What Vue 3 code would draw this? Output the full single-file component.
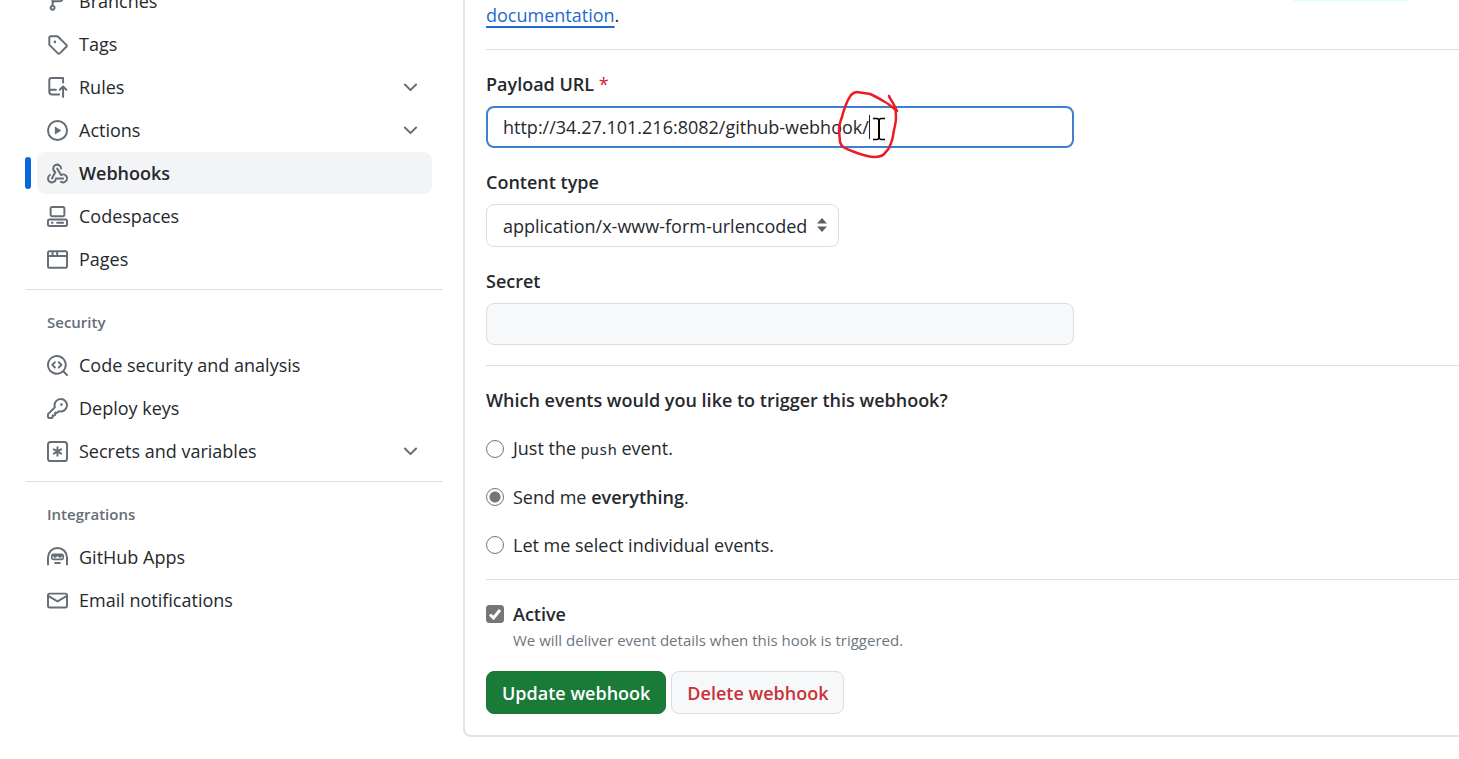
<script setup>
import { ref } from 'vue'

const icons = {
  branch: ['M9.5 3.25a2.25 2.25 0 1 1 3 2.122V6A2.5 2.5 0 0 1 10 8.5H6a1 1 0 0 0-1 1v1.128a2.251 2.251 0 1 1-1.5 0V5.372a2.25 2.25 0 1 1 1.5 0v1.836A2.493 2.493 0 0 1 6 7h4a1 1 0 0 0 1-1v-.628A2.25 2.25 0 0 1 9.5 3.25Zm-6 0a.75.75 0 1 0 1.5 0 .75.75 0 0 0-1.5 0Zm8.25-.75a.75.75 0 1 0 0 1.5.75.75 0 0 0 0-1.5ZM4.25 12a.75.75 0 1 0 0 1.5.75.75 0 0 0 0-1.5Z'],
  tag: ['M1 7.775V2.75C1 1.784 1.784 1 2.75 1h5.025c.464 0 .91.184 1.238.513l6.25 6.25a1.75 1.75 0 0 1 0 2.474l-5.026 5.026a1.75 1.75 0 0 1-2.474 0l-6.25-6.25A1.752 1.752 0 0 1 1 7.775Zm1.5 0c0 .066.026.13.073.177l6.25 6.25a.25.25 0 0 0 .354 0l5.025-5.025a.25.25 0 0 0 0-.354l-6.25-6.25a.25.25 0 0 0-.177-.073H2.75a.25.25 0 0 0-.25.25ZM6 5a1 1 0 1 1 0 2 1 1 0 0 1 0-2Z'],
  rules: ['M1 2.5A2.5 2.5 0 0 1 3.5 0h8.75a.75.75 0 0 1 .75.75v3.5a.75.75 0 0 1-1.5 0V1.5h-8a1 1 0 0 0-1 1v6.708A2.493 2.493 0 0 1 3.5 9h3.25a.75.75 0 0 1 0 1.5H3.5a1 1 0 0 0 0 2h5.75a.75.75 0 0 1 0 1.5H3.5A2.5 2.5 0 0 1 1 11.5Zm13.23 7.79h-.001l-1.224-1.224v6.184a.75.75 0 0 1-1.5 0V9.066L10.28 10.29a.75.75 0 0 1-1.06-1.061l2.505-2.504a.75.75 0 0 1 1.06 0L15.29 9.23a.751.751 0 0 1-.018 1.042.751.751 0 0 1-1.042.018Z'],
  play: ['M8 0a8 8 0 1 1 0 16A8 8 0 0 1 8 0ZM1.5 8a6.5 6.5 0 1 0 13 0 6.5 6.5 0 0 0-13 0Zm4.879-2.773 4.264 2.559a.25.25 0 0 1 0 .428l-4.264 2.559A.25.25 0 0 1 6 10.559V5.442a.25.25 0 0 1 .379-.215Z'],
  webhook: [
    'M5.5 4.25a2.25 2.25 0 0 1 4.5 0 .75.75 0 0 0 1.5 0 3.75 3.75 0 1 0-6.14 2.889l-2.272 4.258a.75.75 0 0 0 1.324.706L7 7.25a.75.75 0 0 0-.309-1.015A2.25 2.25 0 0 1 5.5 4.25Z',
    'M7.364 3.607a.75.75 0 0 1 1.03.257l2.608 4.349a3.75 3.75 0 1 1-.628 6.785.75.75 0 0 1 .752-1.299 2.25 2.25 0 1 0-.033-3.88.75.75 0 0 1-1.03-.256L7.107 4.636a.75.75 0 0 1 .257-1.03Z',
    'M2.9 8.776A.75.75 0 0 1 2.625 9.8 2.25 2.25 0 1 0 6 11.75a.75.75 0 0 1 .75-.751h5.5a.75.75 0 0 1 0 1.5H7.425a3.75 3.75 0 1 1-5.55-3.998.75.75 0 0 1 1.024.274Z',
  ],
  codespaces: [
    'M0 11.25c0-.966.784-1.75 1.75-1.75h12.5c.966 0 1.75.784 1.75 1.75v3A1.75 1.75 0 0 1 14.25 16H1.75A1.75 1.75 0 0 1 0 14.25Zm2-9.5C2 .784 2.784 0 3.75 0h8.5C13.216 0 14 .784 14 1.75v5a1.75 1.75 0 0 1-1.75 1.75h-8.5A1.75 1.75 0 0 1 2 6.75Zm1.75-.25a.25.25 0 0 0-.25.25v5c0 .138.112.25.25.25h8.5a.25.25 0 0 0 .25-.25v-5a.25.25 0 0 0-.25-.25Zm-2 9.5a.25.25 0 0 0-.25.25v3c0 .138.112.25.25.25h12.5a.25.25 0 0 0 .25-.25v-3a.25.25 0 0 0-.25-.25Z',
    'M7 12.75a.75.75 0 0 1 .75-.75h4.5a.75.75 0 0 1 0 1.5h-4.5a.75.75 0 0 1-.75-.75Zm-4 0a.75.75 0 0 1 .75-.75h.5a.75.75 0 0 1 0 1.5h-.5a.75.75 0 0 1-.75-.75Z',
  ],
  browser: ['M0 2.75C0 1.784.784 1 1.75 1h12.5c.966 0 1.75.784 1.75 1.75v10.5A1.75 1.75 0 0 1 14.25 15H1.75A1.75 1.75 0 0 1 0 13.25ZM14.5 6h-13v7.25c0 .138.112.25.25.25h12.5a.25.25 0 0 0 .25-.25Zm-6-3.5v2h6V2.75a.25.25 0 0 0-.25-.25ZM5 2.5v2h2v-2Zm-3.25 0a.25.25 0 0 0-.25.25V4.5h2v-2Z'],
  codescan: [
    'M8.47 4.97a.75.75 0 0 0 0 1.06L9.94 7.5 8.47 8.97a.75.75 0 1 0 1.06 1.06l2-2a.75.75 0 0 0 0-1.06l-2-2a.75.75 0 0 0-1.06 0ZM6.53 6.03a.75.75 0 0 0-1.06-1.06l-2 2a.75.75 0 0 0 0 1.06l2 2a.75.75 0 1 0 1.06-1.06L5.06 7.5l1.47-1.47Z',
    'M12.246 13.307a7.501 7.501 0 1 1 1.06-1.06l2.474 2.473a.749.749 0 0 1-.326 1.275.749.749 0 0 1-.734-.215ZM1.5 7.5a6.002 6.002 0 0 0 3.608 5.504 6.002 6.002 0 0 0 6.486-1.117.748.748 0 0 1 .292-.293A6 6 0 1 0 1.5 7.5Z',
  ],
  key: ['M10.5 0a5.499 5.499 0 1 1-1.288 10.848l-.932.932a.749.749 0 0 1-.53.22H7v.75a.749.749 0 0 1-.22.53l-.5.5a.749.749 0 0 1-.53.22H5v.75a.749.749 0 0 1-.22.53l-.5.5a.749.749 0 0 1-.53.22h-2A1.75 1.75 0 0 1 0 14.25v-2c0-.199.079-.389.22-.53l4.932-4.932A5.5 5.5 0 0 1 10.5 0Zm-4 5.5c-.001.431.069.86.205 1.269a.75.75 0 0 1-.181.768L1.5 12.56v1.69c0 .138.112.25.25.25h1.69l.06-.06v-1.19a.75.75 0 0 1 .75-.75h1.19l.06-.06v-1.19a.75.75 0 0 1 .75-.75h1.19l1.023-1.025a.75.75 0 0 1 .768-.18A4 4 0 1 0 6.5 5.5ZM11 6a1 1 0 1 1 0-2 1 1 0 0 1 0 2Z'],
  secret: [
    'M0 2.75A2.75 2.75 0 0 1 2.75 0h10.5A2.75 2.75 0 0 1 16 2.75v10.5A2.75 2.75 0 0 1 13.25 16H2.75A2.75 2.75 0 0 1 0 13.25ZM2.75 1.5c-.69 0-1.25.56-1.25 1.25v10.5c0 .69.56 1.25 1.25 1.25h10.5c.69 0 1.25-.56 1.25-1.25V2.75c0-.69-.56-1.25-1.25-1.25Z',
    'M8 4a.75.75 0 0 1 .75.75V6.7l1.69-.975a.75.75 0 0 1 .75 1.3L9.5 8l1.69.975a.75.75 0 0 1-.75 1.3L8.75 9.3v1.95a.75.75 0 0 1-1.5 0V9.3l-1.69.975a.75.75 0 0 1-.75-1.3L6.5 8l-1.69-.975a.75.75 0 0 1 .75-1.3L7.25 6.7V4.75A.75.75 0 0 1 8 4Z',
  ],
  hubot: ['M0 8a8 8 0 1 1 16 0v5.25a.75.75 0 0 1-1.5 0V8a6.5 6.5 0 1 0-13 0v5.25a.75.75 0 0 1-1.5 0Zm5.5 4.25a.75.75 0 0 1 .75-.75h3.5a.75.75 0 0 1 0 1.5h-3.5a.75.75 0 0 1-.75-.75ZM3 6.75C3 5.784 3.784 5 4.75 5h6.5c.966 0 1.75.784 1.75 1.75v1.5A1.75 1.75 0 0 1 11.25 10h-6.5A1.75 1.75 0 0 1 3 8.25Zm1.25 0v1.5c0 .276.224.5.5.5h6.5a.5.5 0 0 0 .5-.5v-1.5l-1.35 1.35a.55.55 0 0 1-.78 0L8 6.98l-1.62 1.12a.55.55 0 0 1-.78 0Z'],
  mail: ['M1.75 2h12.5c.966 0 1.75.784 1.75 1.75v8.5A1.75 1.75 0 0 1 14.25 14H1.75A1.75 1.75 0 0 1 0 12.25v-8.5C0 2.784.784 2 1.75 2ZM1.5 12.251c0 .138.112.25.25.25h12.5a.25.25 0 0 0 .25-.25V5.809L8.38 9.397a.75.75 0 0 1-.76 0L1.5 5.809v6.442Zm13-8.181v-.32a.25.25 0 0 0-.25-.25H1.75a.25.25 0 0 0-.25.25v.32L8 7.88Z'],
}

const sections = [
  {
    items: [
      { label: 'Branches', icon: 'branch' },
      { label: 'Tags', icon: 'tag' },
      { label: 'Rules', icon: 'rules', expandable: true },
      { label: 'Actions', icon: 'play', expandable: true },
      { label: 'Webhooks', icon: 'webhook', current: true },
      { label: 'Codespaces', icon: 'codespaces' },
      { label: 'Pages', icon: 'browser' },
    ],
  },
  {
    title: 'Security',
    items: [
      { label: 'Code security and analysis', icon: 'codescan' },
      { label: 'Deploy keys', icon: 'key' },
      { label: 'Secrets and variables', icon: 'secret', expandable: true },
    ],
  },
  {
    title: 'Integrations',
    items: [
      { label: 'GitHub Apps', icon: 'hubot' },
      { label: 'Email notifications', icon: 'mail' },
    ],
  },
]

const url = ref('http://34.27.101.216:8082/github-webhook/')
const secret = ref('')
const contentType = ref('form')
const events = ref('all')
const active = ref(true)
</script>

<template>
  <div class="page">
    <nav class="sidebar" aria-label="Settings">
      <section v-for="(section, i) in sections" :key="i" class="group">
        <h2 v-if="section.title" class="group-title">{{ section.title }}</h2>
        <ul class="list">
          <li v-for="item in section.items" :key="item.label" class="row" :class="{ current: item.current }">
            <component
              :is="item.expandable ? 'button' : 'a'"
              class="item"
              :href="item.expandable ? undefined : '#'"
              :type="item.expandable ? 'button' : undefined"
            >
              <svg class="icon" viewBox="0 0 16 16" aria-hidden="true">
                <path v-for="d in icons[item.icon]" :key="d" :d="d" fill-rule="evenodd" />
              </svg>
              <span class="item-label">{{ item.label }}</span>
              <svg v-if="item.expandable" class="icon" viewBox="0 0 16 16" aria-hidden="true">
                <path d="M12.78 5.22a.749.749 0 0 1 0 1.06l-4.25 4.25a.749.749 0 0 1-1.06 0L3.22 6.28a.749.749 0 1 1 1.06-1.06L8 8.939l3.72-3.719a.749.749 0 0 1 1.06 0Z" />
              </svg>
            </component>
          </li>
        </ul>
      </section>
    </nav>

    <main class="card">
      <p class="intro"><a href="#">documentation</a>.</p>
      <form @submit.prevent>
        <div class="block">
          <label class="label" for="url">Payload URL <span class="required">*</span></label>
          <div class="field">
            <input id="url" v-model="url" class="input focused" type="text" />
            <svg class="annotation" viewBox="0 0 66 74" aria-hidden="true">
              <path class="caret" d="M35.5 25v24" />
              <path class="beam" d="M45 29v20" />
              <path class="serif" d="M39 28.500h4l2 1 2-1h4M39 49.500h4l2-1 2 1h4" />
              <path class="ink" d="M55 6C56 9 58 11 59 13L63 21C59 18 55 14 51 12C46 9 41 6 36 4C32 3 27 3 23 2C20 2 19 3 17 5C15 8 14 10 13 12C11 17 9 22 8 27C6 32 5 36 5 40L6 52C7 55 8 56 9 57C14 60 18 61 23 63C29 65 35 67 40 67C45 67 49 66 51 63C54 60 56 57 57 53C59 49 59 45 60 40C61 36 62 31 62 27C62 24 62 21 61 18" />
            </svg>
          </div>
          <label class="label" for="type">Content type</label>
          <div class="select-wrap">
            <select id="type" v-model="contentType" class="select">
              <option value="form">application/x-www-form-urlencoded</option>
              <option value="json">application/json</option>
            </select>
            <svg class="arrows" viewBox="0 0 10 14" aria-hidden="true"><path d="M0 5.500 5 0l5 5.500ZM0 8.500h10L5 14Z" /></svg>
          </div>
          <label class="label" for="secret">Secret</label>
          <input id="secret" v-model="secret" class="input muted" type="password" />
        </div>

        <fieldset class="block events">
          <legend class="legend">Which events would you like to trigger this webhook?</legend>
          <label class="choice"><input v-model="events" class="radio" type="radio" name="events" value="push" /><span>Just the <code>push</code> event.</span></label>
          <label class="choice"><input v-model="events" class="radio" type="radio" name="events" value="all" /><span>Send me <strong>everything</strong>.</span></label>
          <label class="choice"><input v-model="events" class="radio" type="radio" name="events" value="some" /><span>Let me select individual events.</span></label>
        </fieldset>

        <div class="block">
          <div class="choice">
            <span class="check-wrap">
              <input id="active" v-model="active" class="check" type="checkbox" />
              <svg v-if="active" class="tick" viewBox="0 0 18 18" aria-hidden="true"><path d="M4 9.500 7.500 13 14 5" /></svg>
            </span>
            <label class="active-label" for="active">Active</label>
          </div>
          <p class="note">We will deliver event details when this hook is triggered.</p>
          <div class="buttons">
            <button type="submit" class="btn primary">Update webhook</button>
            <button type="button" class="btn danger">Delete webhook</button>
          </div>
        </div>
      </form>
    </main>
    <div class="edge"></div>
  </div>
</template>

<style>
html,
body {
  background: #fff;
}
</style>

<style scoped>
* {
  box-sizing: border-box;
}
.page {
  position: relative;
  display: grid;
  grid-template-columns: 417px minmax(0, 1fr);
  column-gap: 20px;
  align-items: start;
  min-height: 100vh;
  padding-left: 26px;
  overflow: hidden;
  color: #25292e;
  font: 400 18px/28px "Segoe UI", "Open Sans", "Noto Sans", sans-serif;
}
.sidebar {
  margin-top: -20px;
}
.group + .group {
  margin-top: 9px;
  border-top: 1px solid #dcdfe3;
}
.group-title {
  margin: 0;
  padding: 20px 21px 10px;
  color: #656d76;
  font-size: 15px;
  line-height: 24px;
  font-weight: 600;
}
.list {
  display: grid;
  gap: 1px;
  margin: 0;
  padding: 0;
  list-style: none;
}
.row {
  position: relative;
  padding: 0 11px;
}
.item {
  display: flex;
  align-items: center;
  gap: 11px;
  width: 100%;
  height: 42px;
  padding: 0 11px 0 10px;
  border: 0;
  border-radius: 8px;
  background: transparent;
  color: inherit;
  font: inherit;
  text-align: left;
  text-decoration: none;
}
.item-label {
  flex: 1;
}
.icon {
  flex: none;
  width: 21px;
  height: 21px;
  fill: #656d76;
}
.current .item {
  background: #f3f4f6;
  font-weight: 600;
}
.current::before {
  content: "";
  position: absolute;
  left: -1px;
  top: 5px;
  width: 6px;
  height: 32px;
  border-radius: 6px;
  background: #0969da;
}
.card {
  padding: 0 0 21px 21px;
  border: solid #e1e3e6;
  border-width: 0 0 2px 2px;
  border-bottom-left-radius: 8px;
}
.intro {
  margin: 0;
  padding: 1px 0 20px;
}
.intro a {
  color: #1f69cf;
  text-decoration: underline;
  text-decoration-thickness: 2px;
  text-underline-offset: 4px;
}
.block {
  display: flex;
  flex-direction: column;
  align-items: flex-start;
  margin: 0;
  padding: 20px 0;
  border: 0;
  border-top: 1px solid #dcdfe3;
}
.label {
  margin-bottom: 8px;
  font-weight: 600;
}
.required {
  color: #d1242f;
  font-weight: 400;
}
.field,
.select-wrap {
  position: relative;
  max-width: 100%;
  margin-bottom: 20px;
}
.field {
  width: 588px;
}
.input,
.select {
  display: block;
  width: 588px;
  max-width: 100%;
  height: 42px;
  padding: 0 16px;
  border: 1px solid #dadee3;
  border-radius: 8px;
  background: #fff;
  color: inherit;
  font: inherit;
  outline: none;
}
.focused {
  padding: 0 15px;
  border: 2px solid #3f7fd0;
}
.muted {
  background: #f6f8fa;
}
.annotation {
  position: absolute;
  left: 348px;
  top: -16px;
  width: 66px;
  height: 74px;
  fill: none;
  pointer-events: none;
}
.caret {
  stroke: #1f2328;
  stroke-width: 1;
}
.beam {
  stroke: #000;
  stroke-width: 2;
}
.serif {
  stroke: #000;
  stroke-width: 1.5;
}
.ink {
  stroke: #ed1c24;
  stroke-width: 2.5;
  stroke-linejoin: round;
  stroke-linecap: round;
}
.select {
  width: 353px;
  height: 43px;
  appearance: none;
}
.arrows {
  position: absolute;
  right: 12px;
  top: 14px;
  width: 10px;
  height: 14px;
  fill: #57606a;
  pointer-events: none;
}
.events {
  gap: 20px;
}
.legend {
  float: left;
  padding: 0;
  font-weight: 600;
}
.choice {
  display: flex;
  align-items: center;
  gap: 9px;
}
strong,
.active-label {
  font-weight: 600;
}
code {
  font-family: "Noto Sans Mono", "DejaVu Sans Mono", monospace;
  font-size: 15px;
}
.radio {
  flex: none;
  width: 18px;
  height: 18px;
  margin: 0;
  border: 1px solid #767676;
  border-radius: 50%;
  background: #fff;
  appearance: none;
}
.radio:checked {
  background: radial-gradient(circle, #767676 5px, #fff 6px);
}
.check-wrap {
  position: relative;
  width: 18px;
  height: 18px;
}
.check {
  display: block;
  width: 18px;
  height: 18px;
  margin: 0;
  border: 1px solid #767676;
  border-radius: 3px;
  appearance: none;
}
.check:checked {
  background: #767676;
}
.tick {
  position: absolute;
  inset: 0;
  fill: none;
  stroke: #fff;
  stroke-width: 3;
  pointer-events: none;
}
.note {
  margin: 0 0 19px 27px;
  color: #6e7680;
  font-size: 15px;
  line-height: 24px;
}
.block:last-child {
  padding-bottom: 0;
}
.buttons {
  display: flex;
  gap: 5px;
}
.btn {
  height: 43px;
  padding: 0 15px;
  border: 1px solid #dadee3;
  border-radius: 8px;
  background: #f6f8fa;
  font: inherit;
  font-weight: 600;
}
.primary {
  border-color: #1a7737;
  background: #1a7a38;
  color: #fff;
}
.danger {
  color: #c93235;
}
.edge {
  position: absolute;
  top: 0;
  right: 51px;
  width: 115px;
  height: 1px;
  background: #dcfcff;
}
</style>
